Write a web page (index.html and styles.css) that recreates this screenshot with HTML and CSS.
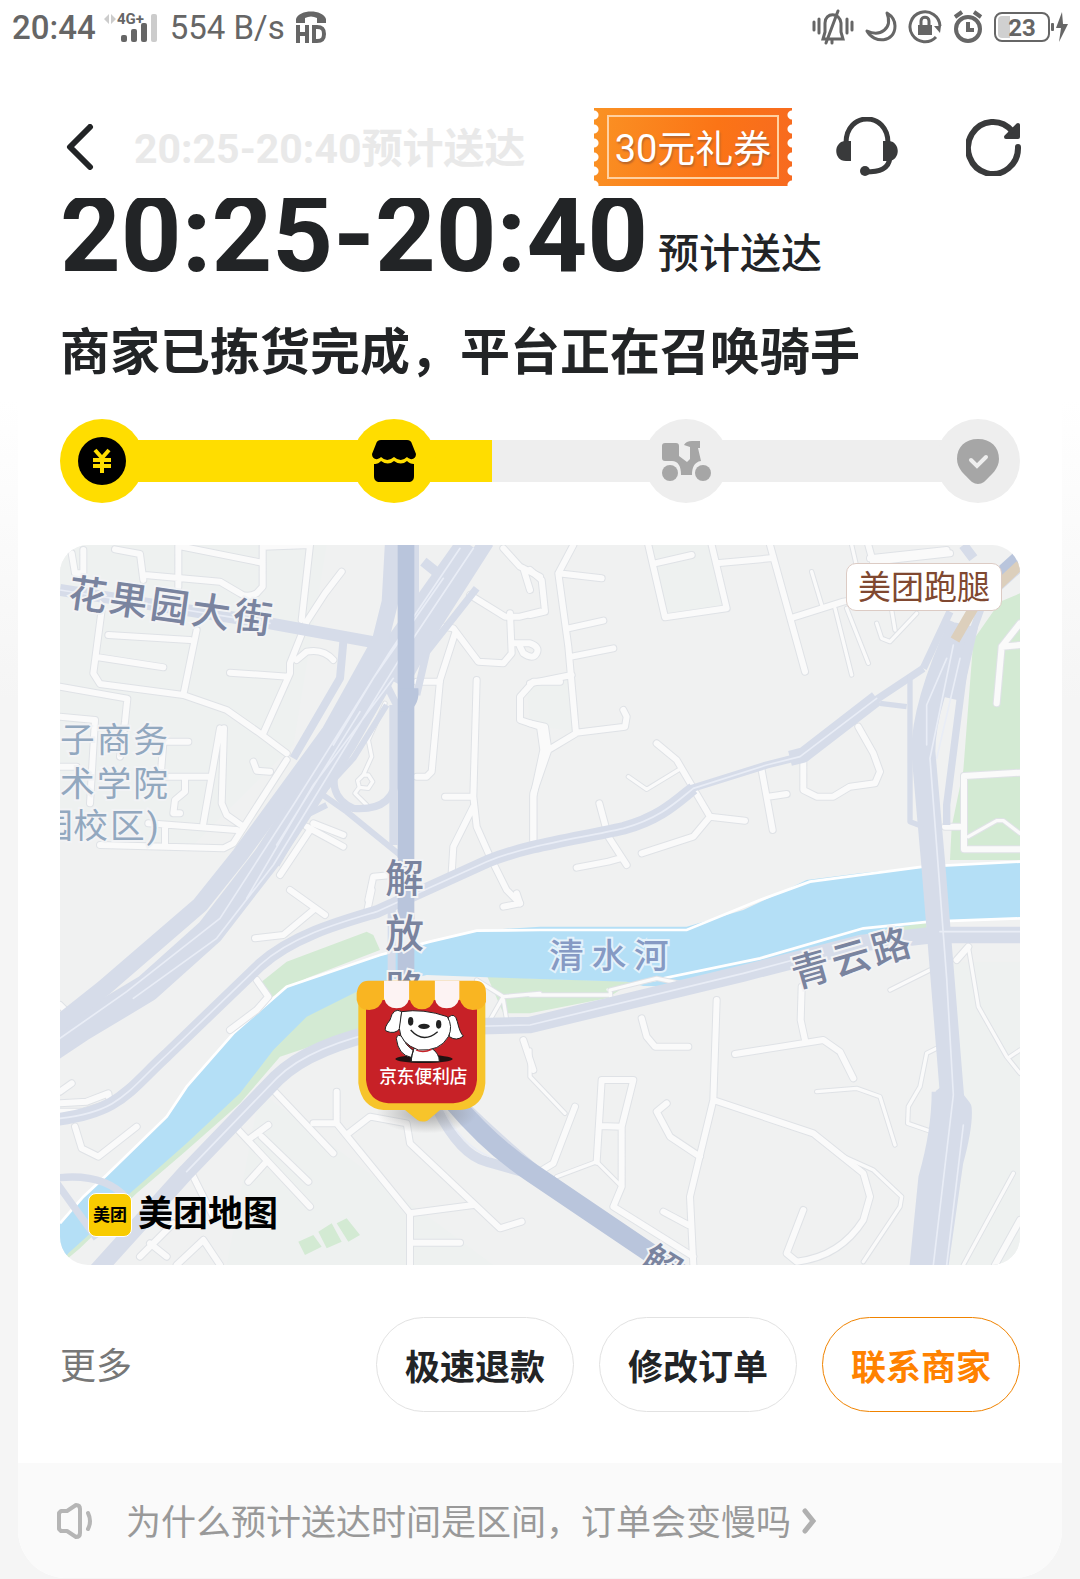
FILE: index.html
```html
<!DOCTYPE html>
<html lang="zh-CN">
<head>
    <meta charset="UTF-8">
    <meta name="viewport" content="width=device-width, initial-scale=1.0">
    <title>订单状态</title>
    <link rel="stylesheet" href="styles.css">
</head>
<body>
    <div class="status-bar">
        <span class="clock">20:44</span>
        <svg class="signal" width="54" height="34" viewBox="0 0 54 34">
            <path d="M0 9l5-5v10zM12 9l-5-5v10z" fill="#ccc"/>
            <text x="13" y="14">4G+</text>
            <rect x="17" y="25" width="6" height="7" rx="2"/>
            <rect x="27" y="19" width="6" height="13" rx="2"/>
            <rect x="37" y="13" width="6" height="19" rx="2"/>
            <rect x="47" y="4" width="6" height="28" rx="2" fill="#ccc"/>
        </svg>
        <span class="speed">554 B/s</span>
        <svg class="volte" width="32" height="34" viewBox="0 0 32 34">
            <path d="M1 13V9C4-1 28-1 31 9v4h-9V8c-4-2-8-2-12 0v5z"/>
            <path d="M3 15v18M12 15v18M3 24h9M19 17v14h3c6 0 7-3 7-7s-1-7-7-7z" fill="none" stroke="#666" stroke-width="4"/>
        </svg>
        <div class="status-right">
            <svg width="42" height="36" viewBox="0 0 42 36" fill="none" stroke="#666" stroke-width="3" stroke-linecap="round">
                <path d="M2 13v8M7 10v14M35 10v14M40 13v8"/>
                <path d="M11 30h20l-2-7v-9c-1-11-16-11-16 0v9zM26 2L14 34M20 31v3"/>
            </svg>
            <svg width="32" height="34" viewBox="0 0 32 34">
                <path d="M22 3c6 16-7 24-20 18 7 13 28 12 28-5 0-6-3-10-8-13z" fill="none" stroke="#666" stroke-width="3" stroke-linejoin="round"/>
            </svg>
            <svg width="34" height="34" viewBox="0 0 34 34">
                <path d="M28 27A15 15 0 1 1 32 16" fill="none" stroke="#666" stroke-width="3"/>
                <path d="M26 16h7l-1 7z"/>
                <rect x="10" y="15" width="14" height="10"/>
                <path d="M13 15v-4c0-5 8-5 8 0v4" fill="none" stroke="#666" stroke-width="3"/>
            </svg>
            <svg width="30" height="34" viewBox="0 0 30 34" fill="none" stroke="#666" stroke-width="4">
                <circle cx="15" cy="19" r="12"/>
                <path d="M15 12v8h6M2 7l7-5M28 7l-7-5"/>
            </svg>
            <div class="battery"><span>23</span></div>
            <svg class="bolt" width="17" height="34" viewBox="0 0 17 34">
                <path d="M11 2L5 18h5L8 32l9-18h-5z"/>
                <rect x="0" y="13" width="3" height="8" rx="1"/>
            </svg>
        </div>
    </div>

    <header class="header">
        <button class="icon-btn back" aria-label="返回">
            <svg width="28" height="46" viewBox="0 0 28 46"><path d="M24 3L4 23l20 20" fill="none" stroke="#222426" stroke-width="6" stroke-linecap="round" stroke-linejoin="round"/></svg>
        </button>
        <span class="header-title">20:25-20:40预计送达</span>
        <button class="coupon"><span>30元礼券</span></button>
        <button class="icon-btn service" aria-label="客服">
            <svg width="62" height="60" viewBox="0 0 62 60">
                <path d="M10 26C10-6 52-6 52 26M54 40c-1 12-10 15-25 15" fill="none" stroke="#393a3b" stroke-width="5"/>
                <path d="M15 24v20h-5c-13 0-13-20 0-20zM47 24v20h5c13 0 13-20 0-20z" fill="#393a3b"/>
                <circle cx="29" cy="54" r="5" fill="#393a3b"/>
            </svg>
        </button>
        <button class="icon-btn refresh" aria-label="刷新">
            <svg width="56" height="58" viewBox="0 0 56 58">
                <path d="M52 29A25 26 0 1 1 46 13" fill="none" stroke="#393a3b" stroke-width="6" stroke-linecap="round"/>
                <path d="M52 7v12H40z" fill="#393a3b" stroke="#393a3b" stroke-width="4" stroke-linejoin="round"/>
            </svg>
        </button>
    </header>

    <main class="card">
        <div class="card-body">
            <h1 class="eta">20:25-20:40 <small>预计送达</small></h1>
            <h2 class="state">商家已拣货完成，平台正在召唤骑手</h2>

            <ol class="progress">
                <li class="done" aria-label="已支付">
                    <svg width="50" height="50" viewBox="0 0 50 50">
                        <circle cx="25" cy="25" r="24"/>
                        <path d="M18 14l7 8 7-8M16 24h18M16 30h18M25 22v15" fill="none" stroke="#ffdd00" stroke-width="4"/>
                    </svg>
                </li>
                <li class="done" aria-label="备货">
                    <svg width="50" height="50" viewBox="0 0 50 50">
                        <path d="M12 4h26q4 0 5 4l4 10c0 5-5 7-9 3q-6 6-13 0-7 6-13 0c-4 4-9 2-9-3L7 8q1-4 5-4z"/>
                        <path d="M5 28c4 0 5-1 7-3q7 5 13 0 7 5 13 0c2 2 4 3 7 3v12c0 4-2 6-6 6H11c-4 0-6-2-6-6z"/>
                    </svg>
                </li>
                <li aria-label="配送">
                    <svg width="50" height="50" viewBox="0 0 50 50" fill="#a6a6a6">
                        <circle cx="9" cy="37" r="8"/>
                        <circle cx="42" cy="37" r="8"/>
                        <path d="M1 10q0-3 3-3h11q3 0 3 3v10l8 6 3-3V11l-6-2q2-4 8-4h8v7h-2l3 13c-7 1-9 7-9 14H20c0-9-3-14-9-14H4q-3 0-3-3z"/>
                    </svg>
                </li>
                <li aria-label="送达">
                    <svg width="50" height="50" viewBox="0 0 50 50" fill="#a6a6a6">
                        <path d="M25 3c13 0 21 8 21 20 0 10-8 16-15 23q-6 4-12 0C12 39 4 33 4 23 4 11 12 3 25 3z"/>
                        <path d="M18 24l6 6 9-9" fill="none" stroke="#eee" stroke-width="4" stroke-linecap="round"/>
                    </svg>
                </li>
            </ol>

            <div class="map">
                <svg class="map-canvas" viewBox="0 0 2880 2160">
                    <defs>
                        <radialGradient id="pin-shadow">
                            <stop offset="0" stop-color="#777" stop-opacity=".6"/>
                            <stop offset="1" stop-color="#777" stop-opacity="0"/>
                        </radialGradient>
                        <!-- side streets, one group per quarter of the map -->
                        <g id="streets">
                            <g transform="translate(-60 -45)">
                                <path d="M60 470L262 506 255 575 240 680M60 560L165 570 150 820M60 710h50M185 240L160 430 180 462 430 495 560 540 660 610 740 670M470 300L430 495M205 315L450 330M175 382L370 412M415 45v125M425 50L660 97M668 45v125L650 190Q620 205 600 190L540 155 315 135M225 58L300 72 310 150M95 70l10 60h25V60M670 50L810 45 785 270M905 125L855 190 800 275 750 400 750 430 670 610M570 428L745 440M770 390L800 365Q850 355 880 390"/>
                                <path d="M540 595L490 880M552 595L545 820 560 855 610 890M375 740H510M435 740V785L405 810 400 850H420M375 635H445M370 640L360 760M325 880L590 900M375 890V950M180 945L550 955 580 940 740 690M640 695L650 722 690 725"/>
                                <path d="M800 890L910 950M820 880L910 915M810 900L720 1035M1055 1035L1000 1040 985 1110"/>
                                <path class="lane-street" d="M1035 520L985 630 995 680 970 735 953 752 958 772 985 775 998 755 985 735 970 735M958 772L945 790 980 825"/>
                                <path d="M1290 195L1395 260H1440L1500 245M1410 250L1415 370 1390 400 1315 395 1240 295 1210 290 1130 385M1245 310L1200 450 1175 725 1160 740H1130M1130 455h70M1390 55L1440 110 1500 140M1450 115L1470 180M1420 340h50Q1500 350 1490 370T1450 370L1440 350M1310 450L1300 800 1310 890 1350 980 1400 1080 1440 1120M1215 800H1300M1300 830L1240 950 1235 1030"/>
                                <path d="M1560 455H1480L1440 500V570L1500 590 1510 660 1480 800V930"/>
                            </g>
                            <g transform="translate(1410 -45)">
                                <path d="M130 45L85 130 115 350 138 610 55 660 10 790V930M85 130L215 145M115 295L220 272M125 380L250 355M0 460L125 435M138 608L285 590 290 560 280 540M0 580L45 590 55 660M0 120L35 150 45 245 0 255M355 45L405 262 590 235 545 45M375 100L485 75M560 100L720 85M720 45L825 425M790 262L940 215 1080 190M1015 45L1030 100M1020 85L1250 60M1030 95L1260 70"/>
                                <path class="lane-street" d="M845 125L875 225M915 235L965 435M950 235L1015 400M965 45L980 110M1040 280L1055 325 1080 335 1160 250M1095 300L1085 240M295 740L350 778 445 720"/>
                                <path d="M380 640L440 690 540 860 490 920 335 970M540 860L645 872M208 820L235 920 290 1005M270 985L235 995 140 1013M695 720L728 900M715 800L770 792M820 690V780L860 800H910L960 770 1035 760 1050 725 1030 670 985 590"/>
                                <path d="M1470 280L1415 350 1400 520M1415 350L1470 345M1470 728L1302 738V958H1470M1245 890H1300"/>
                                <path class="lane-street" d="M1315 920L1400 872H1420L1470 910"/>
                            </g>
                            <g transform="translate(-60 1035)">
                                <path d="M60 345L115 400M60 605L95 580M60 640L140 635 205 610 210 640 130 665H60M105 710L125 775 175 800 290 710M650 270L685 320 650 360 570 420M750 0L855 75M820 60L730 135 645 145M995 0L980 70M700 600L880 790M595 720L810 950M630 745L685 705M665 740L805 875M675 820L625 875M890 605V700H820M890 700L1110 970V1125M925 730L990 680 1100 700 1110 760 1380 1015 1445 995M1110 970L1300 945M1120 1058H1260M450 840L520 980M300 1100L400 1000M330 1060L380 1100M490 1050L540 1125M410 1125L490 1050M1430 10L1440 40 1390 50M1450 450L1480 540"/>
                                <path class="lane-street" d="M1310 270L1390 320 1350 390M1390 320L1500 310M1390 330L1400 390"/>
                            </g>
                            <g transform="translate(1410 1035)">
                                <path d="M135 650L70 820 20 850M200 815L215 570H310L275 710 210 708M275 710L275 890 250 950 490 1100M410 640L380 665 420 740 510 800M560 330L550 630 480 920 490 1125M550 630L850 730 1000 850 1020 920 1000 990Q930 1100 800 1115L770 1090 820 960M400 965L475 1005M335 385L350 440 375 470H475M615 492L880 450 930 485 970 565M815 290L812 390 825 450M1470 990L1395 1125M1315 170L1280 210"/>
                                <path class="lane-street" d="M0 480V560L105 670M80 860L200 815 275 890M930 795L1030 840 1115 920 1110 950 1000 1115M860 605L980 595 1050 620 1095 765M1080 300L1200 240M1220 475L1190 490 1170 590 1135 650 1133 700 1220 730M1315 170L1345 350 1430 500 1470 550M1440 500L1470 480M1450 850L1300 1125M245 345L240 300 380 265 520 295M0 315H235"/>
                            </g>
                        </g>
                    </defs>

                    <rect width="2880" height="2160" fill="#f0f1f1"/>
                    <path d="M0 0H800L700 600 400 900 0 870zM1770 0H1950L2000 190 1820 220zM1400 430L1530 400 1550 560 1410 540zM600 1640L1300 2160H500zM2630 1250H2880V2160H2640z" fill="#eef1f0"/>

                    <g fill="#d3ead3">
                        <path d="M2880 145L2820 170 2740 285 2710 675 2675 845 2670 945H2880z"/>
                        <path d="M605 1310L680 1250 920 1160 940 1170 960 1215 740 1300 630 1360z"/>
                        <path d="M900 1330V1455L660 1535 540 1675 370 1825 230 1945 60 2110 0 2160 150 1900 700 1330z"/>
                        <path d="M1280 1290L1410 1300 1720 1310 1640 1360 1410 1405 1330 1405z"/>
                        <path d="M2290 1220L2500 1150 2600 1130V1160L2440 1205 2300 1240z"/>
                        <path d="M715 2090l45-20 25 35-50 25zM775 2060l40-25 30 55-45 20zM830 2035l30-15 40 50-35 20z"/>
                    </g>
                    <path d="M0 2035L70 1955 140 1890 320 1715 380 1625 520 1465 680 1325 960 1230 1110 1190 1250 1157 1440 1145 1880 1145 2050 1095 2240 1005 2400 985 2590 965 2880 950V1120L2610 1130 2440 1160 2290 1220 2110 1275 1930 1325 1750 1323 1700 1310 1280 1297 1100 1290 890 1340 740 1415 640 1515 540 1645 380 1795 210 1945 80 2075 25 2125 0 2160z" fill="#b4dff6"/>
                    <path d="M0 2035L70 1955 140 1890 320 1715 380 1625 520 1465 680 1325 960 1230 1110 1190 1250 1157 1440 1155 1880 1155 2100 1065 2250 1010 2590 965 2880 950M2880 1120L2610 1130 2410 1150 2100 1240 1640 1335" fill="none" stroke="#fff" stroke-width="8"/>

                    <use href="#streets" class="street-edge"/>
                    <use href="#streets" class="street"/>

                    <!-- main roads -->
                    <g class="road">
                        <path d="M0 135L630 235 960 295" stroke-width="36"/>
                        <path d="M850 290L840 400 700 640" stroke-width="24"/>
                        <path d="M1230 0L1010 310 850 590 620 940 450 1160 260 1330 60 1450 -60 1530" stroke-width="84"/>
                        <path d="M1000 -10L990 170 960 290 810 560 540 930 420 1080 130 1330 -60 1480" stroke-width="50"/>
                        <path d="M1280 -10L1120 240 1020 420" stroke-width="46"/>
                        <path d="M1250 130L1100 320 1070 450" stroke-width="22"/>
                        <path d="M840 640Q790 750 880 790 1010 800 1010 680V480L970 400" stroke-width="22"/>
                        <path d="M980 480L880 640 760 770 650 960M760 730L860 800 1020 930M800 780L700 830" stroke-width="18"/>
                        <path d="M-20 1725C180 1700 200 1640 320 1530L600 1260C700 1170 850 1130 950 1100L1280 950C1400 900 1560 880 1690 850 1800 820 1850 770 1900 730" stroke-width="38"/>
                        <path d="M1890 732L2120 660 2220 635M2440 470L2590 370" stroke-width="22"/>
                        <path d="M2190 640L2230 630 2450 460" stroke-width="46"/>
                        <path d="M0 2300L380 1880 650 1600C720 1530 850 1480 1000 1450L1410 1440 2050 1285 2400 1195 2620 1170 2900 1170" stroke-width="50"/>
                        <path d="M-20 1900Q130 1880 200 1960M-20 1900L110 2080" stroke-width="22"/>
                        <path d="M2700 240Q2590 480 2590 620L2620 960 2680 1700" stroke-width="72"/>
                        <path d="M2650 1620L2705 1690Q2710 1740 2680 1850L2630 2200" stroke-width="60"/>
                        <path d="M2650 1640Q2650 1760 2610 1900L2580 2200" stroke-width="70"/>
                        <path d="M2720 240L2670 460" stroke-width="70"/>
                        <path d="M2550 390V830L2590 845M2460 475L2540 485" stroke-width="16"/>
                        <path d="M2590 370L2670 200M2880 70L2770 170 2720 310 2660 780V840" stroke-width="22"/>
                        <path d="M1130 1690Q1200 1830 1280 1850L1420 1890M1190 1660Q1290 1760 1420 1870" stroke-width="30"/>
                        <path d="M1000 480V900M995 1080V1300M1065 0V300" stroke-width="24"/>
                        <path d="M1090 50l50 40 30-30M2710 0l30 40" stroke-width="30"/>
                    </g>
                    <g class="lane">
                        <path d="M1200 10L990 320 700 780 480 1120 200 1340 0 1480M1240 10L1020 340 860 600 640 960 470 1180 220 1360M1150 100L940 400 820 600M1000 400L760 720 560 1060M900 500L650 900"/>
                        <path d="M0 135L630 235M0 1720C180 1700 200 1640 320 1530L600 1260C700 1170 850 1130 950 1100L1280 950C1400 900 1560 880 1690 850 1800 820 1850 770 1900 730L2120 660 2220 635 2450 460"/>
                        <path d="M380 1880L650 1600C720 1530 850 1480 1000 1450L1410 1440 2050 1285 2200 1245M2640 1160H2880"/>
                        <path d="M2680 300L2610 640 2660 1300 2680 1650 2620 2160M2700 340L2630 640M2710 1740L2660 2160M2600 600V480L2660 340"/>
                        <path d="M1150 1690Q1200 1800 1290 1835"/>
                    </g>
                    <path d="M2880 30L2770 130" fill="none" stroke="#b9c5dc" stroke-width="36"/>
                    <path d="M2880 60L2740 190 2685 285" fill="none" stroke="#dccfbc" stroke-width="30"/>
                    <path d="M1038 0V1130M1038 1200V1300" fill="none" stroke="#b9c5dc" stroke-width="50"/>
                    <path d="M1020 430h55q5 50-30 70h-25z" fill="#b9c5dc"/>
                    <path d="M1180 1670Q1290 1800 1410 1880L1750 2110 1900 2210" fill="none" stroke="#b9c5dc" stroke-width="58"/>

                    <g class="label">
                        <text transform="translate(20 182) rotate(8)" x="0 124 249 374 500">花果园大街</text>
                        <text x="976" y="1042">解</text>
                        <text x="976" y="1207">放</text>
                        <text x="976" y="1373">路</text>
                        <text transform="translate(2208 1330) rotate(-16)" x="0 126 250">青云路</text>
                        <text transform="translate(1732 2165) rotate(32)">解</text>
                        <text class="water" x="1468 1595 1722" y="1270">清水河</text>
                        <g class="place">
                            <text x="0 110 220" y="622">子商务</text>
                            <text x="0 110 220" y="752">术学院</text>
                            <text x="-65 40 150 260" y="880">园校区)</text>
                        </g>
                    </g>

                    <!-- shop pin -->
                    <g transform="translate(840 1245)">
                        <ellipse cx="260" cy="460" rx="150" ry="60" fill="url(#pin-shadow)"/>
                        <path d="M55 110H436V370Q430 445 360 450H300L262 482Q245 488 232 480L195 450H130Q65 445 55 370z" fill="#f7c42b"/>
                        <path d="M78 120H411V360Q405 425 340 430H145Q85 425 78 360z" fill="#c72127"/>
                        <path d="M85 62H405Q438 62 438 100V125Q430 150 398 150 368 150 358 115H130Q120 150 88 150 55 150 50 120V100Q55 62 85 62z" fill="#f9b522"/>
                        <path d="M132 62H208V115Q200 145 170 145 140 145 132 115zM284 62H358V115Q350 145 320 145 290 145 284 115z" fill="#fdf3f3"/>
                        <path d="M208 62H284V115Q275 148 246 148 216 148 208 115z" fill="#f9b522"/>
                        <ellipse cx="252" cy="297" rx="86" ry="12" fill="#211"/>
                        <g fill="#fff" stroke="#222" stroke-width="3">
                            <path d="M213 305Q215 285 220 272 195 255 188 232 172 218 169 236 175 285 213 292zM213 305Q215 280 222 265H275Q298 280 298 305z"/>
                            <path d="M185 155Q160 140 150 180 130 205 138 213 165 225 180 205zM325 172Q345 155 352 185 360 220 370 228 350 245 328 230z"/>
                            <path d="M185 155Q250 145 322 170 340 200 325 230 300 275 235 270 180 250 178 205z"/>
                        </g>
                        <g fill="#222">
                            <ellipse cx="212" cy="184" rx="8" ry="13"/>
                            <ellipse cx="296" cy="193" rx="8" ry="13"/>
                            <ellipse cx="252" cy="199" rx="17" ry="8"/>
                        </g>
                        <path d="M212 210Q250 252 293 215" fill="none" stroke="#222" stroke-width="4"/>
                        <path d="M228 270Q250 280 275 268" fill="none" stroke="#c72127" stroke-width="4"/>
                        <text class="pin-name" x="250" y="369">京东便利店</text>
                    </g>
                </svg>
                <span class="map-tag">美团跑腿</span>
                <div class="map-brand"><span class="map-logo">美团</span><span>美团地图</span></div>
            </div>

            <div class="actions">
                <button class="more">更多</button>
                <button class="pill">极速退款</button>
                <button class="pill">修改订单</button>
                <button class="pill pill-primary">联系商家</button>
            </div>
        </div>

        <a class="notice" href="#">
            <svg width="38" height="38" viewBox="0 0 38 38" fill="none" stroke="#b5b5b5" stroke-width="4" stroke-linejoin="round" stroke-linecap="round">
                <path d="M3 11l2-2h6l9-6q4 0 4 4v24q0 4-4 4l-9-6H5l-2-2zM32 11q4 8 0 16"/>
            </svg>
            <span>为什么预计送达时间是区间，订单会变慢吗</span>
            <svg class="arrow" width="16" height="28" viewBox="0 0 16 28" fill="none" stroke="#b0b0b0" stroke-width="5" stroke-linecap="round">
                <path d="M4 4l8 10-8 10"/>
            </svg>
        </a>
    </main>
</body>
</html>
```
FILE: styles.css
```css
* {
    box-sizing: border-box;
}
body {
    margin: 0;
    font-family: Roboto, "Noto Sans CJK SC", sans-serif;
    color: #222426;
    background: #f5f5f5 linear-gradient(#fff 400px, #f5f5f5 700px) no-repeat;
}
button {
    padding: 0;
    border: none;
    background: none;
    color: inherit;
    font-family: inherit;
    cursor: pointer;
}
svg {
    display: block;
    flex-shrink: 0;
}

/* phone status bar */
.status-bar {
    position: relative;
    z-index: 1;
    display: flex;
    align-items: center;
    height: 54px;
    padding: 0 12px;
    background: #fff;
    color: #666;
    fill: #666;
    font-size: 33px;
}
.clock {
    font-weight: 500;
}
.signal {
    margin: 0 12px 0 8px;
}
.signal text {
    font-size: 15px;
    font-weight: 700;
}
.volte {
    margin-left: 10px;
}
.status-right {
    display: flex;
    align-items: center;
    gap: 11px;
    margin-left: auto;
}
.battery {
    width: 56px;
    height: 30px;
    border: 2px solid #666;
    border-radius: 8px;
    background: linear-gradient(90deg, #d0d0d0 12px, #fff 12px) content-box;
    padding: 2px;
    font-size: 24px;
    font-weight: 700;
    line-height: 24px;
    text-align: center;
}
.bolt {
    margin-left: -10px;
}

.header {
    position: relative;
    z-index: 1;
    display: flex;
    align-items: center;
    height: 144px;
    padding: 42px 58px 0 66px;
    background: #fff;
}
.header-title {
    margin-left: 40px;
    padding-bottom: 4px;
    color: #e9e9e9;
    font-size: 41px;
    font-weight: 700;
    white-space: nowrap;
}
.coupon {
    height: 78px;
    width: 198px;
    margin-left: auto;
    padding: 7px 13px;
    background:
        radial-gradient(circle at 0 50%, #fff 4px, transparent 5px) 0 0 / 100% 14px,
        radial-gradient(circle at 100% 50%, #fff 4px, transparent 5px) 0 0 / 100% 14px,
        linear-gradient(100deg, #fa9224, #fb7416 60%, #f76a20);
    color: #fff;
    font-size: 38px;
    text-shadow: 1px 2px 2px #b8642a;
}
.coupon span {
    display: block;
    border: 2px solid #ffd0a0;
    padding-top: 4px;
    line-height: 56px;
    white-space: nowrap;
}
.service {
    margin-left: 44px;
}
.refresh {
    margin-left: 68px;
}

/* the top of the time is scrolled under the header */
.card {
    margin: -16px 18px 0;
    border-radius: 0 0 48px 48px;
    background: #fff;
    overflow: hidden;
}
.card-body {
    padding: 0 42px 51px;
}
.eta {
    display: flex;
    align-items: flex-end;
    gap: 10px;
    margin: 0;
    font-size: 106px;
    line-height: 106px;
    white-space: nowrap;
}
.eta small {
    padding-bottom: 14px;
    font-size: 41px;
    font-weight: 500;
    line-height: 40px;
}
.state {
    margin: 35px 0 36px;
    font-size: 50px;
    font-weight: 700;
    line-height: 60px;
}

.progress {
    display: flex;
    justify-content: space-between;
    margin: 0 0 42px;
    padding: 0;
    list-style: none;
    background: linear-gradient(90deg, #ffdd00 44.5%, #eee 44.5%) center / calc(100% - 84px) 42px no-repeat;
}
.progress li {
    display: flex;
    align-items: center;
    justify-content: center;
    width: 84px;
    height: 84px;
    border-radius: 50%;
    background: #eee;
}
.progress .done {
    background: #ffdd00;
}

.map {
    position: relative;
    border-radius: 28px;
    overflow: hidden;
}
.map-canvas {
    width: 100%;
    height: auto;
}
.street-edge, .street, .road, .lane {
    fill: none;
    stroke-linecap: round;
    stroke-linejoin: round;
}
.street-edge {
    --edge: 6px;
    stroke: #dfe2e6;
    stroke-width: 24px;
}
.street {
    --edge: 0px;
    stroke: #fafafa;
    stroke-width: 18px;
}
.lane-street {
    stroke-width: calc(10px + var(--edge));
}
.road {
    stroke: #d6dce9;
    stroke-linecap: butt;
}
.lane {
    stroke: #e9edf6;
    stroke-width: 5px;
}
.label {
    fill: #7a849f;
    stroke: #f2f3f5;
    stroke-width: 12px;
    paint-order: stroke;
    font-size: 116px;
    font-weight: 500;
}
.label .water {
    fill: #869ac4;
    stroke: #e4f2fb;
    font-size: 104px;
}
.label .place {
    fill: #92a8bf;
    font-size: 104px;
    font-weight: 400;
}
.pin-name {
    fill: #fff;
    font-size: 53px;
    font-weight: 500;
    text-anchor: middle;
}
.map-tag {
    position: absolute;
    top: 18px;
    right: 18px;
    padding: 2px 11px 0;
    border: 1px solid #dccbc4;
    border-radius: 10px;
    background: #fff;
    color: #804830;
    font-size: 33px;
    line-height: 44px;
}
.map-brand {
    position: absolute;
    left: 28px;
    bottom: 28px;
    display: flex;
    align-items: center;
    gap: 6px;
    color: #000;
    font-size: 35px;
    font-weight: 700;
    line-height: 44px;
}
.map-logo {
    width: 44px;
    border: 1px solid #fff;
    border-radius: 8px;
    background: #f8cb00;
    font-size: 17px;
    line-height: 42px;
    text-align: center;
}

.actions {
    display: flex;
    align-items: center;
    gap: 25px;
    margin-top: 52px;
}
.more {
    margin-right: auto;
    padding-bottom: 3px;
    color: #777;
    font-size: 36px;
}
.pill {
    width: 198px;
    height: 95px;
    border: 1px solid #e2e2e2;
    border-radius: 48px;
    font-size: 35px;
    font-weight: 700;
}
.pill-primary {
    border-color: #f08300;
    color: #ff8200;
}

.notice {
    display: flex;
    align-items: center;
    height: 115px;
    padding: 0 38px;
    background: #fafafa;
    color: #999;
    font-size: 35px;
    text-decoration: none;
    white-space: nowrap;
}
.notice span {
    margin: 0 10px 0 32px;
    padding-bottom: 2px;
}
```
